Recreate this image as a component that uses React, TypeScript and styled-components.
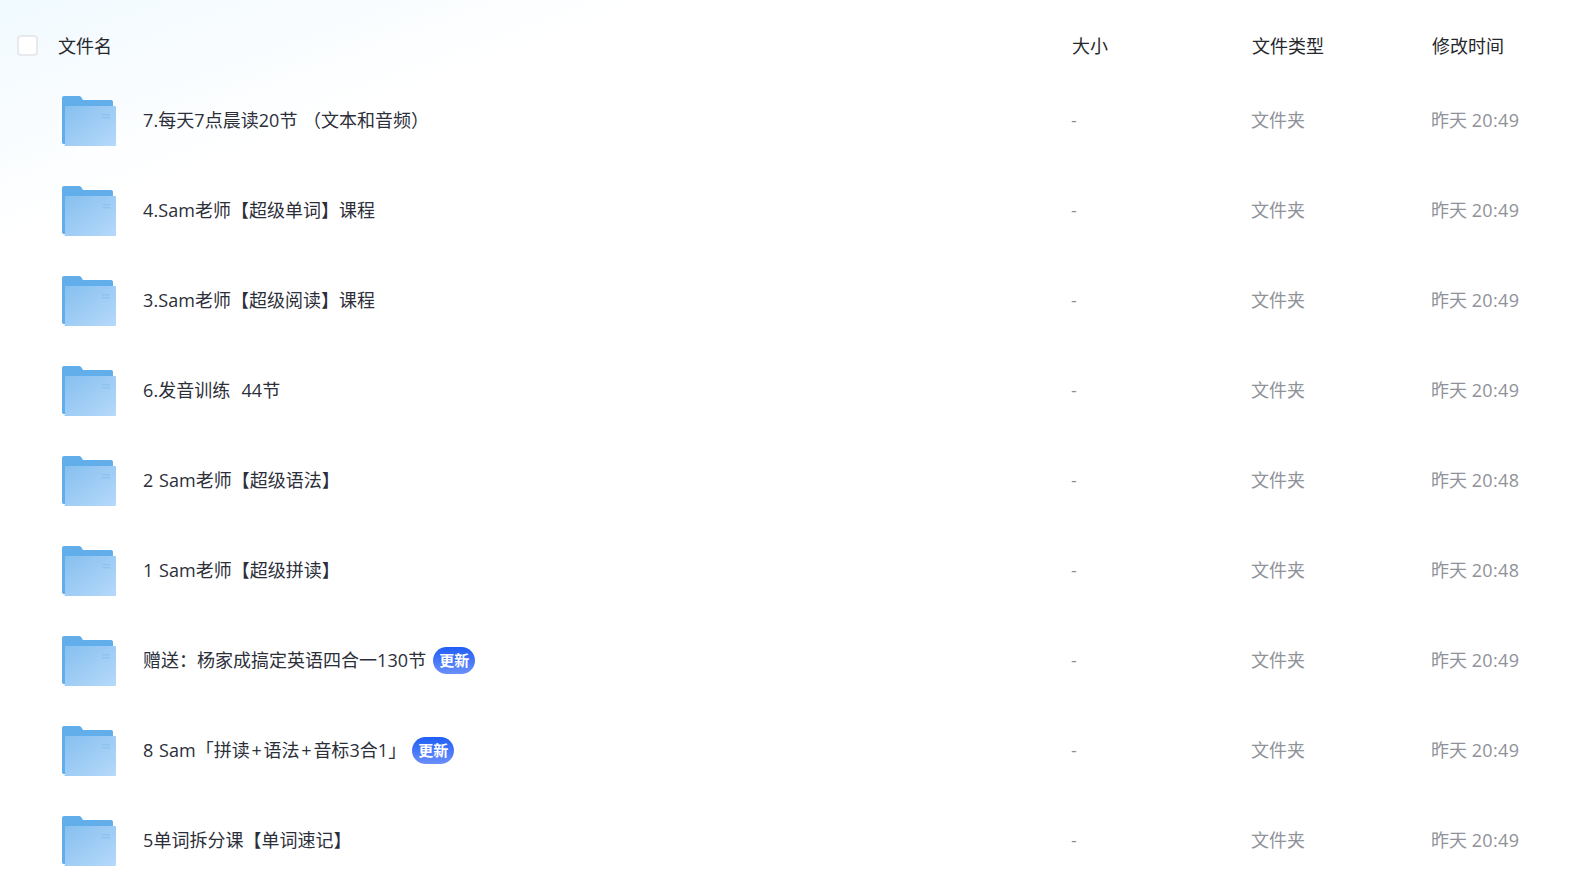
import React from "react"
import styled, { createGlobalStyle } from "styled-components"

const GlobalStyle = createGlobalStyle`
  html, body {
    margin: 0;
    padding: 0;
    background: #fff;
    overflow: hidden;
  }
  body {
    font-family: "Open Sans", "Noto Sans CJK SC", sans-serif;
  }
`

const Page = styled.div`
  width: 1569px;
  height: 888px;
  overflow: hidden;
  background: linear-gradient(160deg, #f0faff 0%, #f6fbff 6%, #fcfeff 13%, #ffffff 17%);
`

const columns = "1071px 180px 180px 1fr"

const HeaderRow = styled.div`
  display: grid;
  grid-template-columns: ${columns};
  align-items: center;
  height: 75px;
  box-sizing: border-box;
  padding-top: 17px;
  font-size: 18px;
  line-height: 24px;
  color: #26272b;
`

const HeaderName = styled.div`
  display: flex;
  align-items: center;
  padding-left: 17px;
  gap: 20px;
`

const HeaderLabel = styled.div`
  padding-left: 1px;
`

const Checkbox = styled.span`
  width: 21px;
  height: 21px;
  margin-top: -1px;
  box-sizing: border-box;
  background: #fff;
  border: 2px solid #e8e9ec;
  border-radius: 4px;
`

const Row = styled.div`
  display: grid;
  grid-template-columns: ${columns};
  align-items: center;
  height: 90px;
  font-size: 18px;
  line-height: 24px;
`

const NameCell = styled.div`
  display: flex;
  align-items: center;
  padding-left: 62px;
  color: #2c2f3a;
`

const FolderWrap = styled.span`
  display: flex;
  width: 54px;
  height: 50px;
  margin: 2px 27px 0 0;
`

const Name = styled.span`
  white-space: pre;
`

const Latin = styled.span<{ $plus?: boolean }>`
  letter-spacing: 0.1px;
  word-spacing: 0.8px;
  padding: 0 ${(p) => (p.$plus ? "1.7px" : "0")};
`

const Badge = styled.span<{ $gap: number }>`
  display: inline-flex;
  align-items: center;
  justify-content: center;
  width: 42px;
  height: 27px;
  margin-left: ${(p) => p.$gap}px;
  border-radius: 14px;
  background: linear-gradient(180deg, #1f5ef5 0%, #6b8ffb 100%);
  color: #fff;
  font-size: 15px;
  font-weight: 700;
`

const Cell = styled.div`
  color: #8f9299;
`

const Time = styled(Cell)`
  span {
    letter-spacing: 0.35px;
  }
`

const FolderIcon = () => (
  <svg width="54" height="50" viewBox="0 0 54 50">
    <defs>
      <linearGradient id="front" x1="0" y1="0" x2="1" y2="1">
        <stop offset="0" stopColor="#85bfef" />
        <stop offset="1" stopColor="#b6d9fa" />
      </linearGradient>
    </defs>
    <path
      d="M2 0H17C18.5 0 19.5 1 20 2.5L21 4H49C50.5 4 51 5 51 6V48H2C.8 48 0 47.5 0 46V2C0 .8.8 0 2 0Z"
      fill="#62aeeb"
    />
    <path
      d="M3 10.5C3 10 3.5 10 4 10H53C53.6 10 54 10.5 54 11V48.5C54 49.5 53.5 50 52.5 50H1C2.4 50 3 49 3 48Z"
      fill="url(#front)"
    />
    <rect x="40" y="18" width="8" height="1.5" fill="#8fc3f0" />
    <rect x="40" y="21" width="8" height="1.5" fill="#8fc3f0" />
  </svg>
)

const files = [
  { name: "7.每天7点晨读20节 （文本和音频）", time: "20:49" },
  { name: "4.Sam老师【超级单词】课程", time: "20:49" },
  { name: "3.Sam老师【超级阅读】课程", time: "20:49" },
  { name: "6.发音训练  44节", time: "20:49" },
  { name: "2 Sam老师【超级语法】", time: "20:48" },
  { name: "1 Sam老师【超级拼读】", time: "20:48" },
  { name: "赠送：杨家成搞定英语四合一130节", time: "20:49", badgeGap: 7 },
  { name: "8 Sam「拼读+语法+音标3合1」", time: "20:49", badgeGap: 6 },
  { name: "5单词拆分课【单词速记】", time: "20:49" },
]

const renderName = (name: string) =>
  name.split(/([\x20-\x7e]+)/).map((part, i) =>
    i % 2 === 1 ? (
      <Latin key={i} $plus={part === "+"}>
        {part}
      </Latin>
    ) : (
      part
    )
  )

const App = () => {
  return (
    <Page>
      <GlobalStyle />
      <HeaderRow>
        <HeaderName>
          <Checkbox />
          文件名
        </HeaderName>
        <HeaderLabel>大小</HeaderLabel>
        <HeaderLabel>文件类型</HeaderLabel>
        <HeaderLabel>修改时间</HeaderLabel>
      </HeaderRow>
      {files.map((file) => (
        <Row key={file.name}>
          <NameCell>
            <FolderWrap>
              <FolderIcon />
            </FolderWrap>
            <Name>{renderName(file.name)}</Name>
            {file.badgeGap !== undefined && <Badge $gap={file.badgeGap}>更新</Badge>}
          </NameCell>
          <Cell>-</Cell>
          <Cell>文件夹</Cell>
          <Time>
            昨天 <span>{file.time}</span>
          </Time>
        </Row>
      ))}
    </Page>
  )
}

export default App
